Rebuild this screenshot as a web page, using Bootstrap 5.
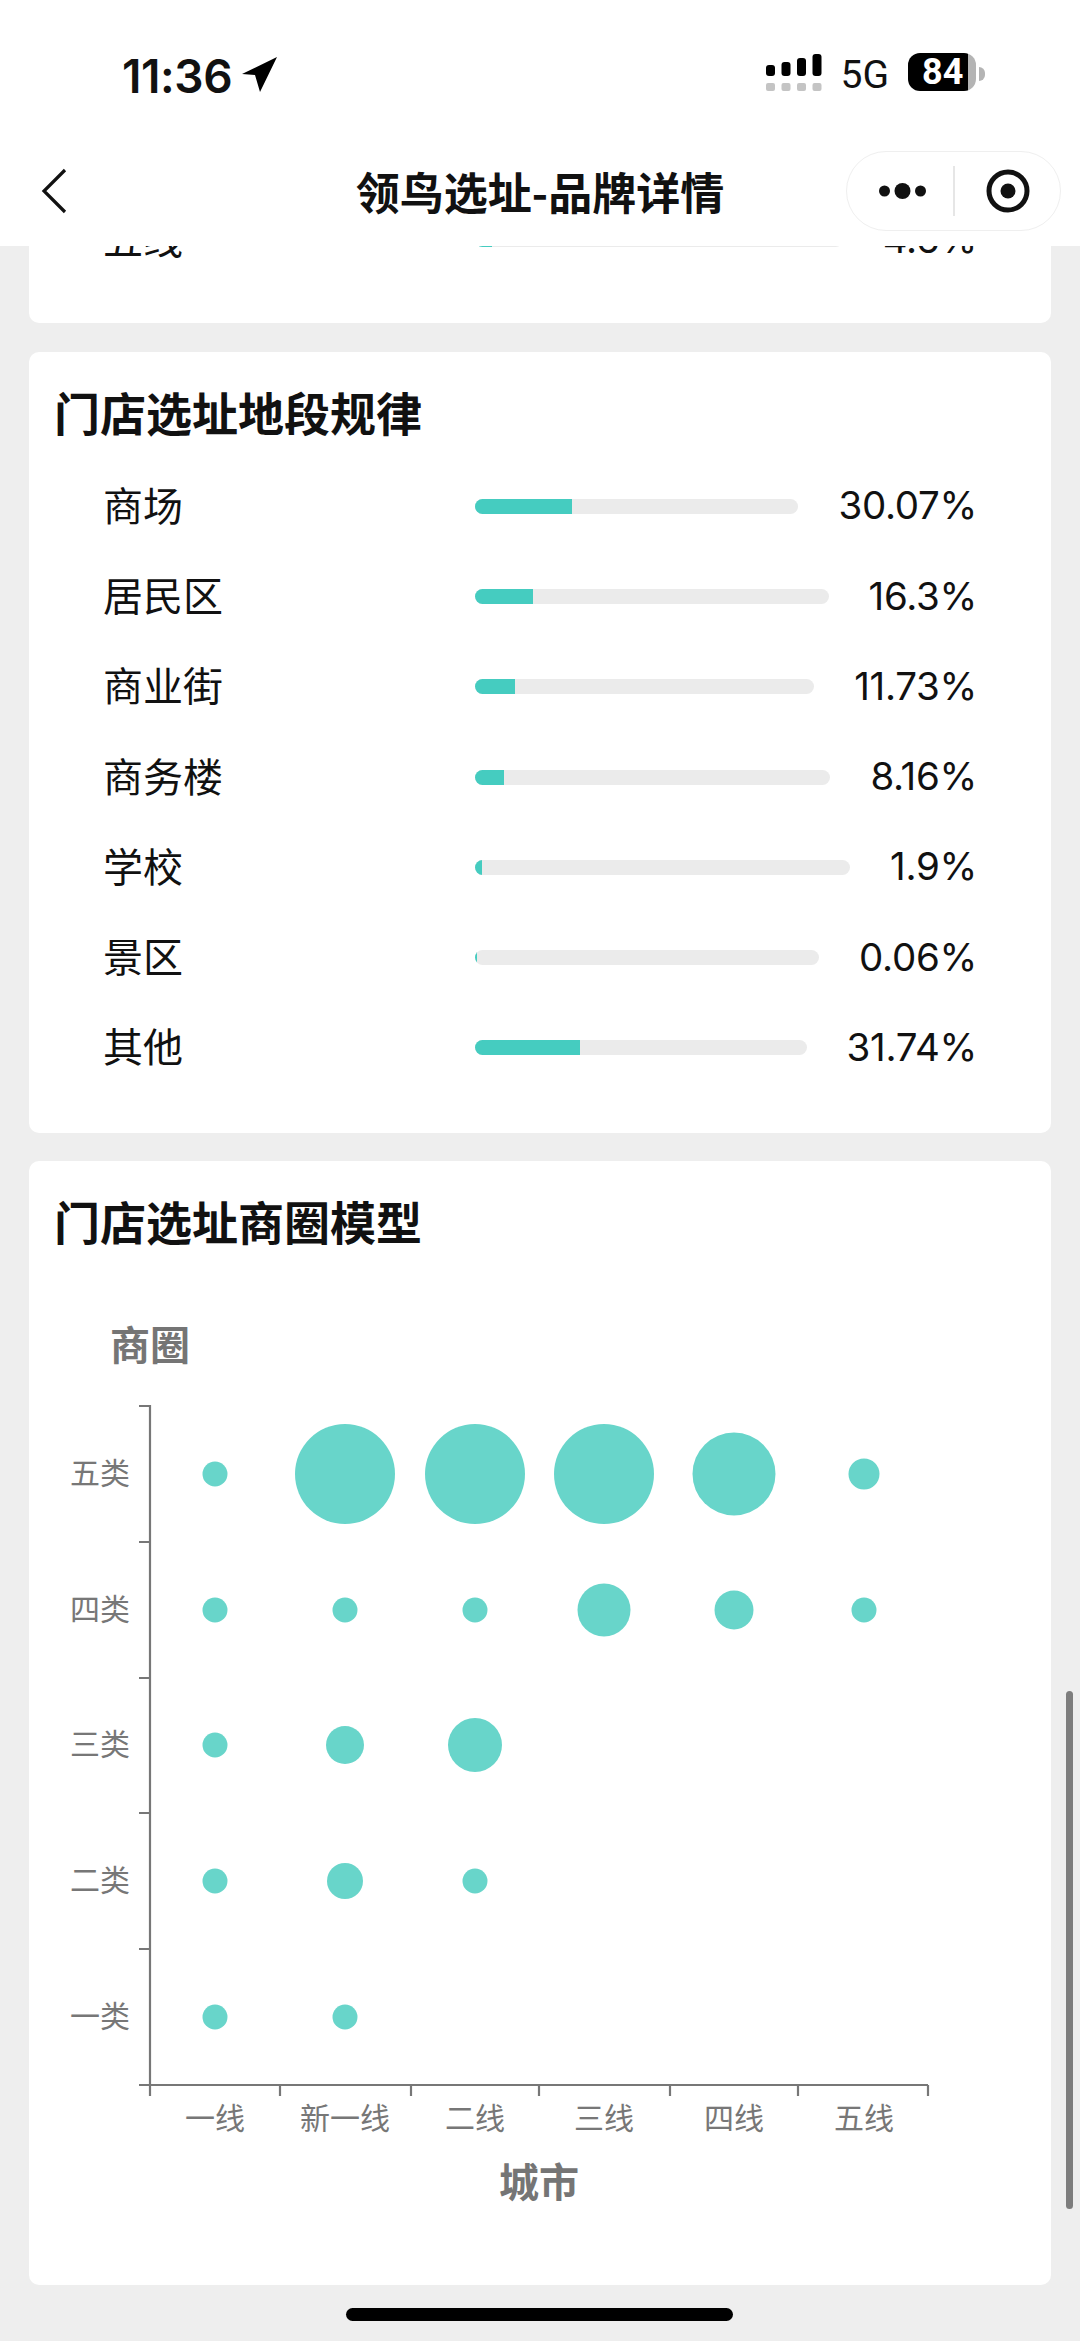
<!DOCTYPE html>
<html lang="zh-CN">
<head>
    <meta charset="UTF-8">
    <meta name="viewport" content="width=device-width, initial-scale=1.0">
    <title>领鸟选址-品牌详情</title>
    <link href="https://cdn.jsdelivr.net/npm/bootstrap@5.3.0/dist/css/bootstrap.min.css" rel="stylesheet">
    <style>
        html, body { height: 2341px; overflow: hidden; }
        body {
            position: relative;
            width: 1080px;
            background: #eeeeee;
            color: #111;
            font-family: Inter, "Noto Sans CJK SC", sans-serif;
        }
        /* top bars */
        .top-head { position: relative; z-index: 2; height: 246px; background: #fff; }
        .status-row { height: 151px; padding: 53px 95px 0 122px; align-items: flex-start; }
        .clock { font-weight: 600; font-size: 46px; line-height: 38px; margin-top: 4px; letter-spacing: -.4px; }
        .loc-arrow { margin: 4px 0 0 10px; }
        .net { font-family: Roboto, sans-serif; font-size: 39px; line-height: 38px; margin: 3px 19px 0 19px; }
        .batt {
            width: 68px; height: 38px; border-radius: 12px;
            background: linear-gradient(90deg, #000 88%, #b4b4b4 88%);
            color: #fff; font-family: Roboto, sans-serif; font-weight: 700; font-size: 36px; line-height: 38px;
            padding-left: 14px;
        }
        .batt-nub { width: 6px; height: 14px; margin-left: 3px; border-radius: 0 6px 6px 0; background: #b4b4b4; align-self: center; }
        .title-row { position: relative; height: 80px; }
        .page-name { font-family: "Noto Sans CJK SC", sans-serif; font-weight: 700; font-size: 44px; line-height: 80px; text-align: center; color: #111; }
        .back-btn { position: absolute; left: 41px; top: 17px; }
        .capsule {
            position: absolute; left: 846px; top: 0; width: 215px; height: 80px;
            border: 1px solid #efefef; border-radius: 40px; background: #fff;
        }
        .capsule-dots { margin-left: 32px; flex: none; }
        .capsule-target { flex: none; }
        .capsule-line { width: 2px; height: 50px; background: #e6e6e6; margin: 0 31px 0 27px; }
        /* cards */
        .sheet { margin: 0 29px 28px; border-radius: 10px; border: 0; background: #fff; }
        .sheet-cut { margin-top: -30px; margin-bottom: 29px; height: 107px; }
        .sheet-loc { height: 781px; padding: 33px 74px 0 25px; }
        .sheet-chart { height: 1124px; padding: 33px 0 0 25px; }
        .sheet-title { font-family: "Noto Sans CJK SC", sans-serif; font-weight: 700; font-size: 46px; line-height: 52px; height: 52px; margin: 0; color: #111; }
        .loc-list { margin-top: 24px; padding-left: 49px; }
        .sheet-cut .loc-list { margin-top: 0; padding: 1px 74px 0 74px; }
        .loc-row { height: 90.3px; }
        .sheet-cut .loc-row { height: 45px; }
        .loc-name { width: 372px; padding-bottom: 5px; font-family: "Noto Sans CJK SC", sans-serif; font-size: 40px; flex: none; }
        .loc-val { margin-left: 40px; font-size: 38.5px; flex: none; letter-spacing: -.3px; }
        .loc-track { height: 15px; border-radius: 8px; background: #ebebeb; flex: 1 1 0; }
        .loc-track .progress-bar { background: #45ccc0; }
        .sheet-chart svg { display: block; margin: 23px 0 0 -25px; }
        .axis-text { font-family: "Noto Sans CJK SC", sans-serif; font-size: 30px; fill: #777; }
        .axis-name { font-family: "Noto Sans CJK SC", sans-serif; font-size: 40px; font-weight: 700; fill: #757575; }
        /* overlays */
        .scroll-thumb { position: absolute; left: 1066px; top: 1691px; width: 7px; height: 518px; border-radius: 4px; background: #7d7d7d; }
        .home-bar { position: absolute; left: 346px; top: 2308px; width: 387px; height: 13px; border-radius: 7px; background: #000; }
    </style>
</head>
<body>
    <div class="top-head">
        <div class="status-row d-flex">
            <span class="clock">11:36</span>
            <svg class="loc-arrow" width="36" height="36" viewBox="0 0 36 36"><polygon points="0,17 35,0 18,35 13,18" fill="#000"/></svg>
            <div class="ms-auto d-flex">
                <svg width="56" height="38" viewBox="0 0 56 38">
                    <g fill="#000">
                        <rect x="0" y="12" width="9" height="11" rx="3"/>
                        <rect x="15.5" y="9" width="9" height="14" rx="3"/>
                        <rect x="31" y="5" width="9" height="18" rx="3"/>
                        <rect x="46.5" y="1" width="9" height="22" rx="3"/>
                    </g>
                    <g fill="#c4c4c4">
                        <rect x="0" y="30" width="9" height="8" rx="2"/>
                        <rect x="15.5" y="30" width="9" height="8" rx="2"/>
                        <rect x="31" y="30" width="9" height="8" rx="2"/>
                        <rect x="46.5" y="30" width="9" height="8" rx="2"/>
                    </g>
                </svg>
                <span class="net">5G</span>
                <div class="batt">84</div>
                <div class="batt-nub"></div>
            </div>
        </div>
        <div class="title-row">
            <svg class="back-btn" width="26" height="46" viewBox="0 0 26 46"><path d="M24 2 L3 23 L24 44" fill="none" stroke="#111" stroke-width="3.2"/></svg>
            <div class="page-name">领鸟选址-品牌详情</div>
            <div class="capsule d-flex align-items-center">
                <svg class="capsule-dots" width="47" height="18" viewBox="0 0 47 18">
                    <circle cx="5.5" cy="9" r="5.5" fill="#111"/>
                    <circle cx="23.5" cy="9" r="8" fill="#111"/>
                    <circle cx="41.5" cy="9" r="5.5" fill="#111"/>
                </svg>
                <div class="capsule-line"></div>
                <svg class="capsule-target" width="44" height="44" viewBox="0 0 44 44">
                    <circle cx="22" cy="22" r="19" fill="none" stroke="#111" stroke-width="5"/>
                    <circle cx="22" cy="22" r="7.5" fill="#111"/>
                </svg>
            </div>
        </div>
    </div>

    <div class="card sheet sheet-cut overflow-hidden">
        <div class="loc-list">
            <div class="loc-row d-flex align-items-center">
                <span class="loc-name">五线</span>
                <div class="progress loc-track"><div class="progress-bar" style="width:4.6%"></div></div>
                <span class="loc-val">4.6%</span>
            </div>
        </div>
    </div>

    <div class="card sheet sheet-loc">
        <h5 class="sheet-title">门店选址地段规律</h5>
        <div class="loc-list">
            <div class="loc-row d-flex align-items-center">
                <span class="loc-name">商场</span>
                <div class="progress loc-track"><div class="progress-bar" style="width:30.07%"></div></div>
                <span class="loc-val">30.07%</span>
            </div>
            <div class="loc-row d-flex align-items-center">
                <span class="loc-name">居民区</span>
                <div class="progress loc-track"><div class="progress-bar" style="width:16.3%"></div></div>
                <span class="loc-val">16.3%</span>
            </div>
            <div class="loc-row d-flex align-items-center">
                <span class="loc-name">商业街</span>
                <div class="progress loc-track"><div class="progress-bar" style="width:11.73%"></div></div>
                <span class="loc-val">11.73%</span>
            </div>
            <div class="loc-row d-flex align-items-center">
                <span class="loc-name">商务楼</span>
                <div class="progress loc-track"><div class="progress-bar" style="width:8.16%"></div></div>
                <span class="loc-val">8.16%</span>
            </div>
            <div class="loc-row d-flex align-items-center">
                <span class="loc-name">学校</span>
                <div class="progress loc-track"><div class="progress-bar" style="width:1.9%"></div></div>
                <span class="loc-val">1.9%</span>
            </div>
            <div class="loc-row d-flex align-items-center">
                <span class="loc-name">景区</span>
                <div class="progress loc-track"><div class="progress-bar" style="width:0.6%"></div></div>
                <span class="loc-val">0.06%</span>
            </div>
            <div class="loc-row d-flex align-items-center">
                <span class="loc-name">其他</span>
                <div class="progress loc-track"><div class="progress-bar" style="width:31.74%"></div></div>
                <span class="loc-val">31.74%</span>
            </div>
        </div>
    </div>

    <div class="card sheet sheet-chart">
        <h5 class="sheet-title">门店选址商圈模型</h5>
        <!-- viewBox uses full page coordinates so the chart numbers read straight off the picture -->
        <svg width="1022" height="1015" viewBox="29 1270 1022 1015">
            <text class="axis-name" x="150" y="1361" text-anchor="middle">商圈</text>
            <text class="axis-name" x="539" y="2198" text-anchor="middle">城市</text>

            <g stroke="#777" stroke-width="2.2" fill="none">
                <path d="M139 1407 H150 V2086"/>
                <path d="M139 1543 H150 M139 1679 H150 M139 1814 H150 M139 1950 H150"/>
                <path d="M139 2086 H928"/>
                <path d="M150 2086 V2097 M280 2086 V2097 M411 2086 V2097 M539 2086 V2097 M670 2086 V2097 M798 2086 V2097 M928 2086 V2097"/>
            </g>

            <g text-anchor="end">
                <text class="axis-text" x="130" y="1485">五类</text>
                <text class="axis-text" x="130" y="1621">四类</text>
                <text class="axis-text" x="130" y="1756">三类</text>
                <text class="axis-text" x="130" y="1892">二类</text>
                <text class="axis-text" x="130" y="2028">一类</text>
            </g>
            <g text-anchor="middle">
                <text class="axis-text" x="215" y="2130">一线</text>
                <text class="axis-text" x="345" y="2130">新一线</text>
                <text class="axis-text" x="475" y="2130">二线</text>
                <text class="axis-text" x="604" y="2130">三线</text>
                <text class="axis-text" x="734" y="2130">四线</text>
                <text class="axis-text" x="864" y="2130">五线</text>
            </g>

            <g fill="#68d5ca">
                <circle cx="215" cy="1475" r="12.5"/>
                <circle cx="345" cy="1475" r="50"/>
                <circle cx="475" cy="1475" r="50"/>
                <circle cx="604" cy="1475" r="50"/>
                <circle cx="734" cy="1475" r="41.5"/>
                <circle cx="864" cy="1475" r="15.5"/>

                <circle cx="215" cy="1611" r="12.5"/>
                <circle cx="345" cy="1611" r="12.5"/>
                <circle cx="475" cy="1611" r="12.5"/>
                <circle cx="604" cy="1611" r="26.5"/>
                <circle cx="734" cy="1611" r="19.5"/>
                <circle cx="864" cy="1611" r="12.5"/>

                <circle cx="215" cy="1746" r="12.5"/>
                <circle cx="345" cy="1746" r="19"/>
                <circle cx="475" cy="1746" r="27"/>

                <circle cx="215" cy="1882" r="12.5"/>
                <circle cx="345" cy="1882" r="18"/>
                <circle cx="475" cy="1882" r="12.5"/>

                <circle cx="215" cy="2018" r="12.5"/>
                <circle cx="345" cy="2018" r="12.5"/>
            </g>
        </svg>
    </div>

    <div class="scroll-thumb"></div>
    <div class="home-bar"></div>

    <script src="https://cdn.jsdelivr.net/npm/bootstrap@5.3.0/dist/js/bootstrap.bundle.min.js"></script>
</body>
</html>
